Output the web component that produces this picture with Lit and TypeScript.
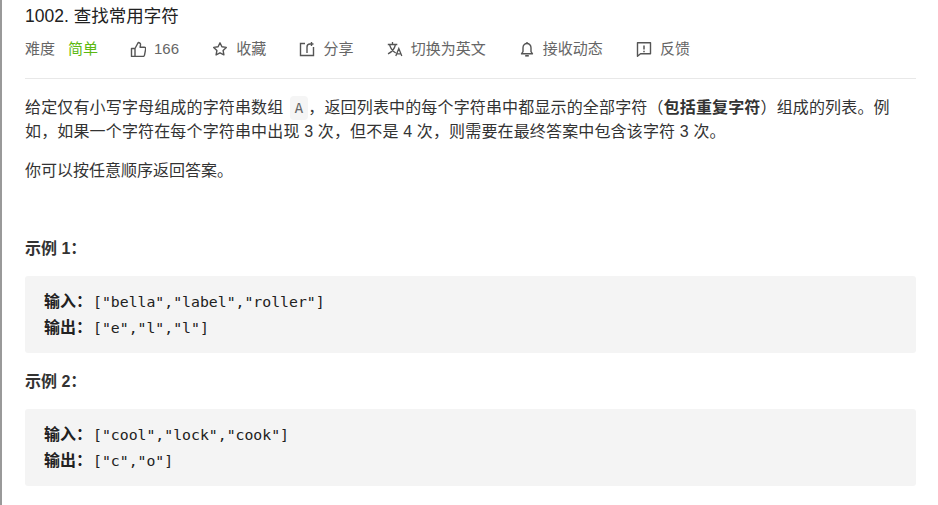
import { LitElement, html, css, svg } from 'lit';
import { customElement } from 'lit/decorators.js';

const icons = {
    like: svg`<path d="M1.500 7.500h3.500v8H1.500zM5 7.500l3.200-6c1.600 0 2.500 1 2.300 2.400l-.4 2.300h4.200c1 0 1.600.9 1.400 1.800l-1.200 6.100c-.2.800-.8 1.400-1.600 1.400H5" fill="none" stroke="currentColor" stroke-width="1.400" stroke-linejoin="round"/>`,
    star: svg`<path d="M8 1.800l1.900 4 4.400.6-3.200 3.100.8 4.400L8 11.800l-3.900 2.100.8-4.400-3.200-3.100 4.400-.6z" fill="none" stroke="currentColor" stroke-width="1.400" stroke-linejoin="round"/>`,
    share: svg`<path d="M6 2.500H1.500v12h13V6M8 12V6c0-1.800 1-3 3-3h3.500M12.500 1v4" fill="none" stroke="currentColor" stroke-width="1.400"/>`,
    translate: svg`<path d="M.8 3.500h9.500M5.500 1v2.500M2.500 3.500c1.200 4.300 3.500 7 6.300 8.500M8.500 3.500C7.600 7.500 5 11 1 12.800M8.800 15l3-7.500 3 7.500M9.800 12.800h4" fill="none" stroke="currentColor" stroke-width="1.300"/>`,
    bell: svg`<path d="M2.500 12.800h11L12 10.600V6.800c0-2.400-1.700-4.300-4-4.300S4 4.400 4 6.800v3.800z" fill="none" stroke="currentColor" stroke-width="1.400" stroke-linejoin="round"/><path d="M6.200 14.800h3.600" stroke="currentColor" stroke-width="1.600"/><path d="M8 1v1.500" stroke="currentColor" stroke-width="1.400"/>`,
    feedback: svg`<path d="M1.500 1.800h13v11H4.500l-3 2.400z" fill="none" stroke="currentColor" stroke-width="1.400" stroke-linejoin="round"/><path d="M8 4.500v4M8 9.700v1.500" stroke="currentColor" stroke-width="1.500"/>`,
};

type Action = { icon: keyof typeof icons; label: string };

const actions: Action[] = [
    { icon: 'like', label: '166' },
    { icon: 'star', label: '收藏' },
    { icon: 'share', label: '分享' },
    { icon: 'translate', label: '切换为英文' },
    { icon: 'bell', label: '接收动态' },
    { icon: 'feedback', label: '反馈' },
];

const examples = [
    { title: '示例 1：', input: '["bella","label","roller"]', output: '["e","l","l"]' },
    { title: '示例 2：', input: '["cool","lock","cook"]', output: '["c","o"]' },
];

@customElement('app-root')
export class AppRoot extends LitElement {
    static styles = css`
        :host {
            display: block;
            box-sizing: border-box;
            height: 505px;
            overflow: hidden;
            padding: 0 22px 0 23px;
            border-left: 2px solid #999;
            background: #fff;
            color: #333;
            font: 16px/24px "Liberation Sans", "Noto Sans CJK SC", sans-serif;
        }

        h1 {
            margin: 0;
            padding-top: 4px;
            height: 26px;
            font-size: 17.5px;
            font-weight: 400;
            line-height: 24px;
            color: #212121;
        }

        .meta {
            display: flex;
            align-items: center;
            height: 24px;
            margin-top: 7px;
            font-size: 15px;
            color: #666;
        }

        .level {
            margin-left: 13px;
            margin-right: 32px;
            color: #5cb811;
        }

        .action {
            display: flex;
            align-items: center;
            gap: 8px;
            margin-right: 33.2px;
        }

        .action svg {
            width: 16px;
            height: 16px;
            color: #555;
        }

        hr {
            height: 1px;
            margin: 17px 0 0;
            border: 0;
            background: #e8e8e8;
        }

        .intro {
            margin: 17px 0 0;
            letter-spacing: 0.15px;
        }

        .order {
            margin: 15px 0 0;
        }

        code {
            display: inline-block;
            height: 24px;
            padding: 0 5px;
            margin-left: 1.5px;
            border-radius: 4px;
            background: #f5f5f5;
            color: #666;
            font: 14.6px/24px "DejaVu Sans Mono", monospace;
            letter-spacing: 0;
            vertical-align: top;
        }

        h3 {
            margin: 0;
            font-size: 16px;
            line-height: 24px;
            color: #333;
        }

        .ex-one {
            margin-top: 54px;
        }

        .ex-two {
            margin-top: 17px;
        }

        pre {
            margin: 15px 0 0;
            padding: 13px 19px;
            border-radius: 3px;
            background: #f4f4f4;
            color: #212121;
            font: 14.8px/25.5px "DejaVu Sans Mono", "Noto Sans CJK SC", monospace;
        }

        pre b {
            margin-right: 1px;
            font: 700 16px/25.5px "Liberation Sans", "Noto Sans CJK SC", sans-serif;
        }
    `;

    render() {
        return html`
            <h1>1002. 查找常用字符</h1>
            <div class="meta">
                <span>难度</span>
                <span class="level">简单</span>
                ${actions.map(a => html`
                    <span class="action">
                        <svg viewBox="0 0 16 16">${icons[a.icon]}</svg>
                        ${a.label}
                    </span>
                `)}
            </div>
            <hr />
            <p class="intro">给定仅有小写字母组成的字符串数组 <code>A</code>，返回列表中的每个字符串中都显示的全部字符（<strong>包括重复字符</strong>）组成的列表。例如，如果一个字符在每个字符串中出现 3 次，但不是 4 次，则需要在最终答案中包含该字符 3 次。</p>
            <p class="order">你可以按任意顺序返回答案。</p>
            ${examples.map((ex, i) => html`
                <h3 class=${i === 0 ? 'ex-one' : 'ex-two'}>${ex.title}</h3>
                <pre><b>输入：</b>${ex.input}
<b>输出：</b>${ex.output}</pre>
            `)}
        `;
    }
}
